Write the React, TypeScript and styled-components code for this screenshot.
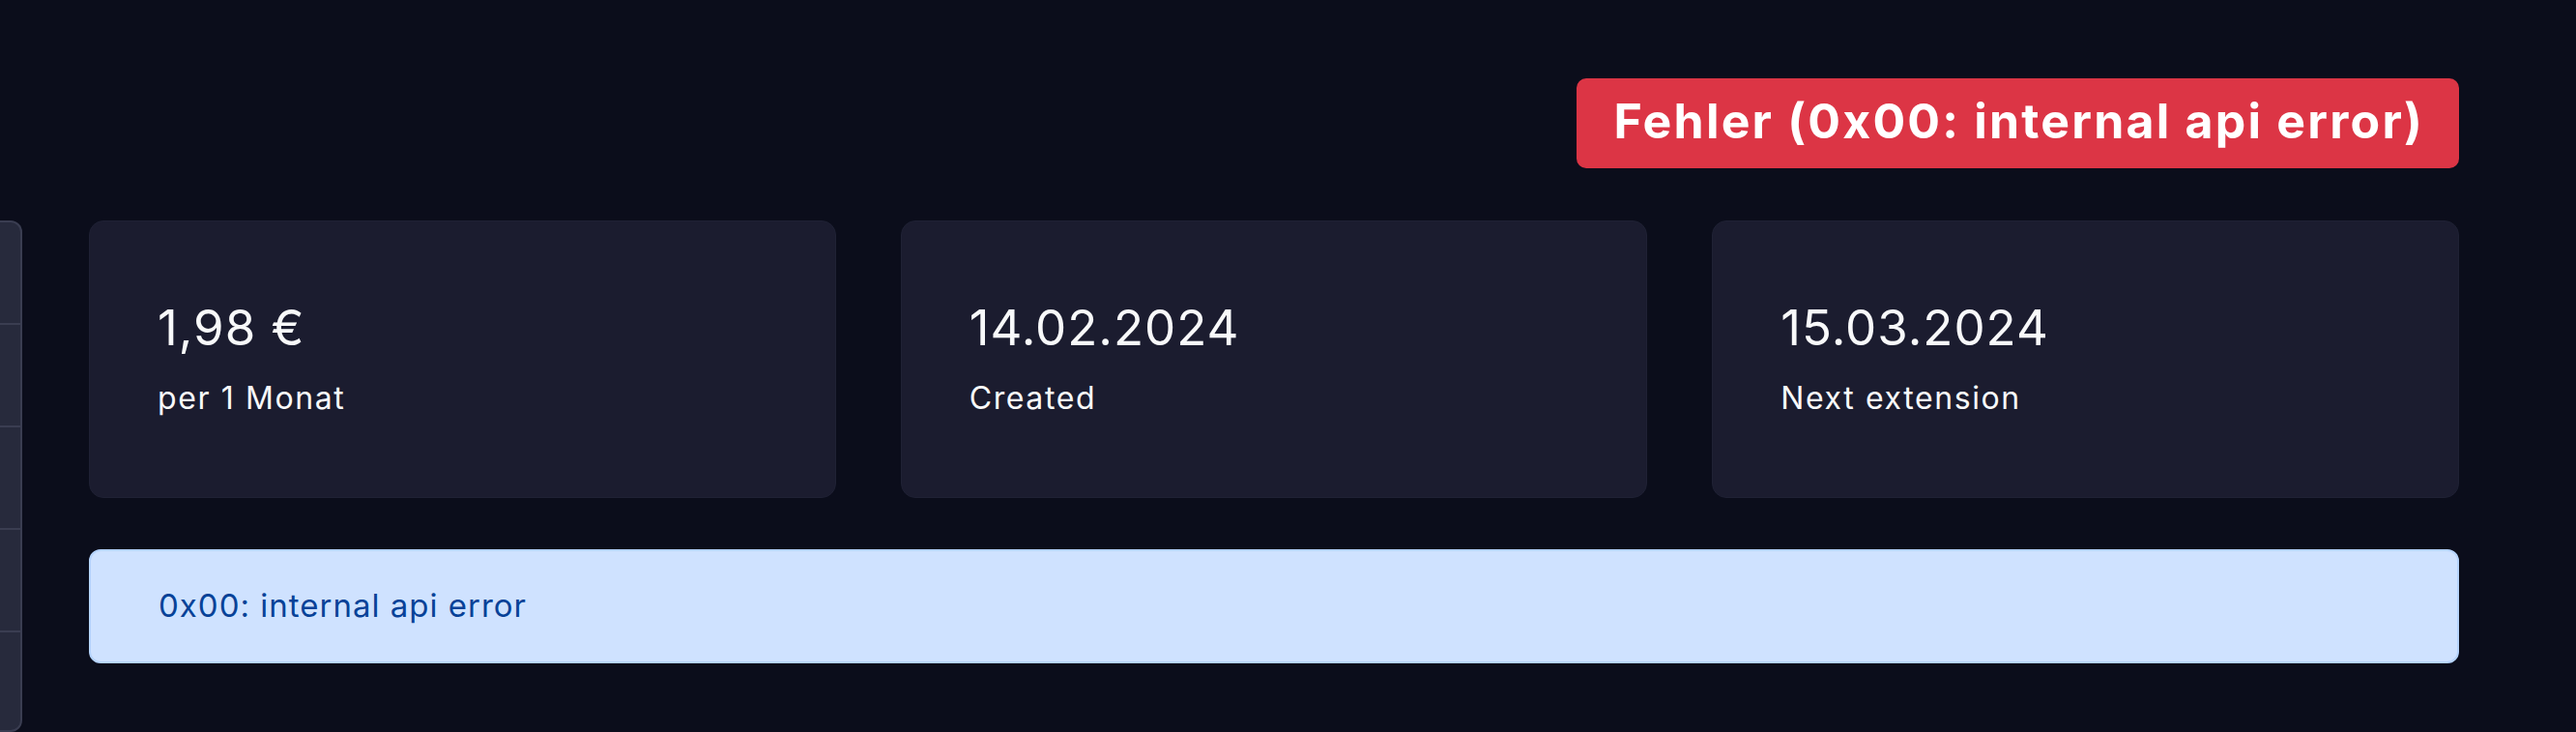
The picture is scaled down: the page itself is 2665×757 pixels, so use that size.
import React from "react";
import styled, { createGlobalStyle } from "styled-components";

const GlobalStyle = createGlobalStyle`
  html, body {
    margin: 0;
    padding: 0;
    background: #0b0d1b;
    font-family: Inter, "Noto Sans", "Liberation Sans", sans-serif;
    color: #f8f9fa;
  }
  * { box-sizing: border-box; }
`;

const Page = styled.div`
  min-height: 757px;
  background: #0b0d1b;
  padding: 81px 121px 0 0;
  display: grid;
  grid-template-columns: 23px 1fr;
  grid-template-rows: auto auto;
  column-gap: 69px;
  row-gap: 54px;
  overflow: hidden;
`;

const Header = styled.div`
  grid-column: 2;
  display: flex;
  justify-content: flex-end;
`;

const Badge = styled.span`
  display: inline-block;
  background: #dc3545;
  color: #ffffff;
  font-weight: 700;
  font-size: 50px;
  letter-spacing: 2.2px;
  line-height: 1;
  padding: 19px 36px 22px 38px;
  border-radius: 10px;
  white-space: nowrap;
`;

const Sidebar = styled.nav`
  grid-column: 1;
  display: flex;
  flex-direction: column;
  background: #272a3c;
  border: 2px solid #3a3d51;
  border-left: none;
  border-radius: 0 12px 12px 0;
  overflow: hidden;
`;

const SideItem = styled.div`
  height: 106px;
  border-bottom: 2px solid #3a3d51;
  &:last-child { border-bottom: none; height: 100px; }
`;

const Main = styled.main`
  grid-column: 2;
  display: flex;
  flex-direction: column;
  gap: 53px;
`;

const Cards = styled.div`
  display: grid;
  grid-template-columns: repeat(3, 1fr);
  gap: 67px;
`;

const Card = styled.div`
  background: #1b1c2f;
  border: 1px solid #1f2134;
  border-radius: 15px;
  padding: 79px 70px 83px;
  display: flex;
  flex-direction: column;
  gap: 24px;
`;

const Value = styled.div`
  font-size: 51px;
  line-height: 1.2;
  letter-spacing: 1px;
  font-weight: 400;
  color: #f8f9fa;
`;

const Label = styled.div`
  font-size: 32px;
  line-height: 1.2;
  letter-spacing: 1.6px;
  color: #f8f9fa;
`;

const Alert = styled.div`
  background: #cfe2ff;
  border: 2px solid #b6d4fe;
  border-radius: 12px;
  padding: 37px 70px 37px;
  color: #084298;
  font-size: 33px;
  letter-spacing: 1px;
  line-height: 1.2;
`;

const stats = [
  { value: "1,98 €", label: "per 1 Monat" },
  { value: "14.02.2024", label: "Created" },
  { value: "15.03.2024", label: "Next extension" },
];

export default function App() {
  return (
    <>
      <GlobalStyle />
      <Page>
        <Header>
          <Badge>Fehler (0x00: internal api error)</Badge>
        </Header>
        <Sidebar>
          {[0, 1, 2, 3, 4].map((i) => (
            <SideItem key={i} />
          ))}
        </Sidebar>
        <Main>
          <Cards>
            {stats.map((s) => (
              <Card key={s.label}>
                <Value>{s.value}</Value>
                <Label>{s.label}</Label>
              </Card>
            ))}
          </Cards>
          <Alert>0x00: internal api error</Alert>
        </Main>
      </Page>
    </>
  );
}
